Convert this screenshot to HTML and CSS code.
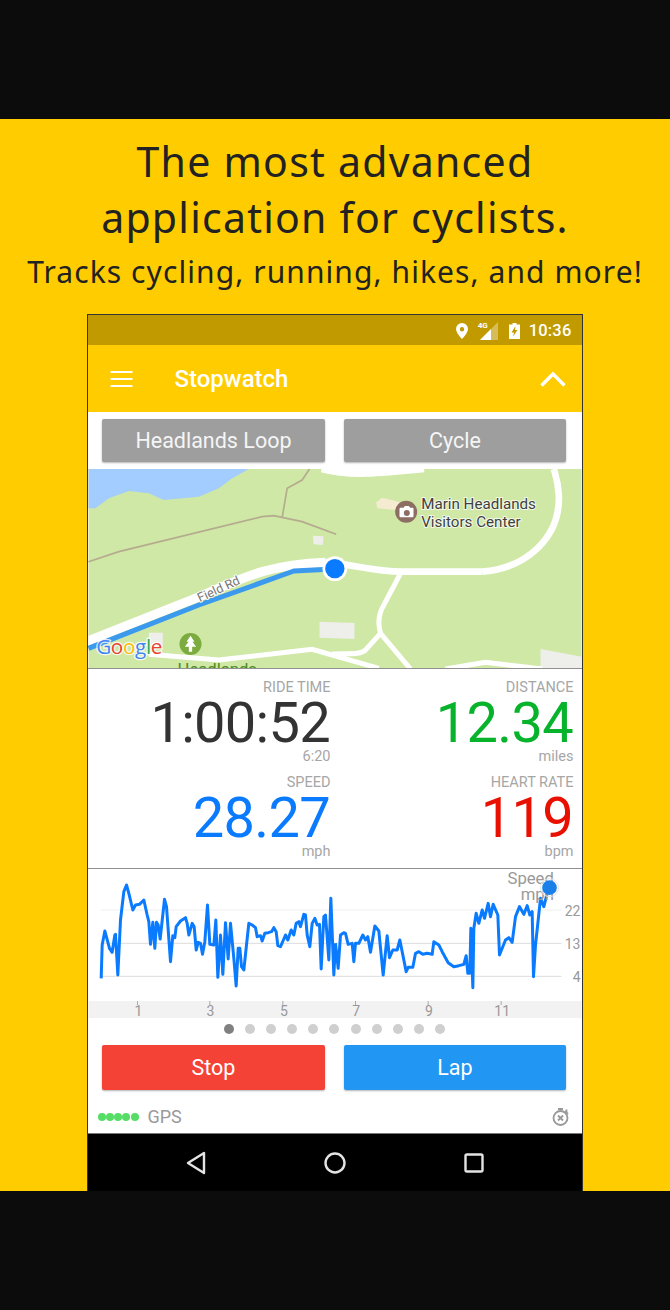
FILE: index.html
```html
<!DOCTYPE html>
<html lang="en">
<head>
<meta charset="utf-8">
<title>Stopwatch</title>
<link rel="stylesheet" href="styles.css">
</head>
<body>
<main class="band">
  <h1 class="headline">The most advanced<br>application for cyclists.</h1>
  <p class="subhead">Tracks cycling, running, hikes, and more!</p>
  <section class="phone">
    <div class="statusbar">
      <svg class="st-pin" viewBox="0 0 12 16"><path fill="#fff" fill-rule="evenodd" d="M6 0a6 6 0 0 0-6 6c0 4 6 10 6 10s6-6 6-10a6 6 0 0 0-6-6zm0 4a2.2 2.2 0 1 1 0 4.4A2.2 2.2 0 0 1 6 4z"/></svg>
      <div class="st-signal">
        <span class="st-4g">4G</span>
        <svg class="st-tri" viewBox="0 0 18 18"><path fill="#fff" opacity=".35" d="M18 0v18H0z"/><path fill="#fff" d="M11 7v11H0z"/></svg>
      </div>
      <svg class="st-batt" viewBox="0 0 11 16"><path fill="#fff" fill-rule="evenodd" d="M3.5 0h4v1.500H11V16H0V1.500h3.500zM6.500 3 2.500 9.500h2.500L4 13.500l4.500-6.500H6z"/></svg>
      <span class="st-time">10:36</span>
    </div>
    <header class="toolbar">
      <svg class="tb-menu" viewBox="0 0 22 16"><path stroke="#fff" stroke-width="2" d="M0 1h22M0 8h22M0 15h22"/></svg>
      <span class="tb-title">Stopwatch</span>
      <svg class="tb-up" viewBox="0 0 26 16"><path fill="none" stroke="#fff" stroke-width="3.400" d="M1.500 14.500 13 3l11.500 11.500"/></svg>
    </header>
    <div class="btnrow btnrow-top">
      <button class="btn btn-grey">Headlands Loop</button>
      <button class="btn btn-grey">Cycle</button>
    </div>
    <svg class="map" viewBox="9 12 1479 597">
      <rect x="9" y="12" width="1479" height="597" fill="#cfe8a6"/>
      <path fill="#a3ccff" d="M9 12H490L440 40 400 70 340 95 235 105 190 85 130 78 70 100 30 130H9z"/>
      <path class="trail" d="M9 290 100 260 530 155 565 152 650 170 752 208M590 158 605 70 650 45 672 12"/>
      <path class="bld" d="M682 212 714 214 712 240 684 238zM702 470 807 474V522L702 518zM1365 552 1490 575V612H1365zM190 503H232V545H190z"/>
      <path fill="#f5ebd0" d="M872 112 890 98 945 112 930 135 875 130z"/>
      <path class="road road-thin" d="M945 325 895 420C880 445 875 470 885 505L840 555C825 570 790 565 740 567M885 505 975 612M190 568 400 585 680 553 880 610M1080 612 1200 592 1370 612"/>
      <path class="road-top" d="M710 6C790 28 880 20 1015 6"/>
      <path class="road road-side" d="M1190 320C1320 310 1425 220 1420 90 1418 50 1410 30 1405 12"/>
      <path class="road road-east" d="M720 292C790 295 860 320 950 320H1190"/>
      <path class="road road-west" d="M-5 533 340 396C460 345 540 298 720 292"/>
      <path class="route" d="M9 550 340 420 625 318 745 312"/>
      <circle cx="748" cy="311" r="37" fill="#fff"/>
      <circle cx="748" cy="311" r="29" fill="#0a7bff"/>
      <circle cx="962" cy="140" r="33" fill="#8d6e63"/>
      <path fill="#fff" fill-rule="evenodd" d="M945 128h9l4-5h12l4 5h7a3 3 0 0 1 3 3v23a3 3 0 0 1-3 3h-36a3 3 0 0 1-3-3v-23a3 3 0 0 1 3-3zm19 7a9 9 0 1 0 0 18 9 9 0 0 0 0-18z"/>
      <circle cx="315" cy="537" r="33" fill="#7cab3f"/>
      <path fill="#fff" d="M315 512 327 530H321L332 545H320V560H310V545H298L309 530H303z"/>
      <text class="map-label" x="1007" y="131">Marin Headlands</text>
      <text class="map-label" x="1007" y="186">Visitors Center</text>
      <text class="map-road" x="343" y="412" transform="rotate(-24.500 343 412)">Field Rd</text>
      <text class="map-park" x="276" y="630">Headlands</text>
      <text class="map-google" x="32" y="568"><tspan fill="#4285f4">G</tspan><tspan fill="#ea4335">o</tspan><tspan fill="#fbbc05">o</tspan><tspan fill="#4285f4">g</tspan><tspan fill="#34a853">l</tspan><tspan fill="#ea4335">e</tspan></text>
    </svg>
    <div class="stats">
      <div class="stat">
        <span class="stat-label">RIDE TIME</span>
        <span class="stat-value v-dark">1:00:52</span>
        <span class="stat-unit">6:20</span>
      </div>
      <div class="stat">
        <span class="stat-label">DISTANCE</span>
        <span class="stat-value v-green">12.34</span>
        <span class="stat-unit">miles</span>
      </div>
      <div class="stat">
        <span class="stat-label">SPEED</span>
        <span class="stat-value v-blue">28.27</span>
        <span class="stat-unit">mph</span>
      </div>
      <div class="stat">
        <span class="stat-label">HEART RATE</span>
        <span class="stat-value v-red">119</span>
        <span class="stat-unit">bpm</span>
      </div>
    </div>
    <svg class="chart" viewBox="9 12 1479 447">
      <rect x="9" y="408" width="1479" height="52" fill="#f2f2f2"/>
      <path class="grid g1" d="M45 135H1428"/>
      <path class="grid" d="M45 235H1428M45 334H1428"/>
      <path class="tick" d="M156 408v12M373 408v12M592 408v12M810 408v12M1028 408v12M1247 408v12"/>
      <polyline class="line" points="47,340 50,240 58,198 68,235 72,250 80,262 88,210 90,208 97,330 105,165 115,80 123,60 130,85 142,135 150,120 162,118 175,105 185,150 190,170 195,238 202,172 208,250 213,172 218,180 224,222 237,103 243,125 255,290 262,212 268,218 272,185 285,168 300,158 305,175 310,210 320,175 326,185 332,255 338,232 345,235 351,268 358,230 366,120 373,238 385,240 391,165 397,337 405,210 412,328 420,173 428,282 435,175 445,280 452,363 458,250 463,250 468,305 475,315 483,240 490,175 500,180 510,188 515,215 525,212 530,228 538,205 548,203 558,200 565,188 572,200 577,242 585,245 595,222 600,210 607,225 617,195 625,210 632,175 640,170 645,185 655,148 660,150 665,210 673,245 680,175 688,160 695,180 702,178 707,312 715,155 720,150 730,285 736,100 745,330 750,235"/>
      <g transform="translate(750 0)">
        <polyline class="line" points="0,235 8,310 15,210 25,203 30,205 38,238 50,235 55,290 60,235 70,235 82,210 90,225 97,215 105,262 118,183 130,198 143,330 155,212 162,278 172,255 185,255 193,225 212,320 218,307 232,307 240,265 250,260 262,268 275,265 290,268 295,230 310,240 320,260 338,293 355,305 370,302 385,298 392,272 397,325 403,325 406,190 412,368 415,190 422,145 430,175 440,135 447,160 458,115 465,155 473,118 487,150 492,270 510,225 520,218 530,232 540,155 552,125 565,148 575,122 583,150 590,140 594,335 600,240 615,100 625,125 635,85"/>
        <text class="ch-legend" x="655" y="58">Speed</text>
        <text class="ch-legend" x="655" y="105">mph</text>
        <circle cx="642" cy="68" r="27" fill="none" stroke="#e6e6e6" stroke-width="3"/>
        <circle cx="642" cy="68" r="22" fill="#1a7fe8"/>
        <text class="ch-axis" x="735" y="152">22</text>
        <text class="ch-axis" x="735" y="251">13</text>
        <text class="ch-axis" x="735" y="350">4</text>
      </g>
      <text class="ch-tick" x="159" y="454">1</text>
      <text class="ch-tick" x="375" y="454">3</text>
      <text class="ch-tick" x="595" y="454">5</text>
      <text class="ch-tick" x="812" y="454">7</text>
      <text class="ch-tick" x="1030" y="454">9</text>
      <text class="ch-tick" x="1250" y="454">11</text>
    </svg>
    <div class="pager">
      <i class="dot dot-on"></i><i class="dot"></i><i class="dot"></i><i class="dot"></i><i class="dot"></i><i class="dot"></i><i class="dot"></i><i class="dot"></i><i class="dot"></i><i class="dot"></i><i class="dot"></i>
    </div>
    <div class="btnrow btnrow-bottom">
      <button class="btn btn-red">Stop</button>
      <button class="btn btn-blue">Lap</button>
    </div>
    <div class="gpsrow">
      <div class="gps-dots"><i></i><i></i><i></i><i></i><i></i></div>
      <span class="gps-text">GPS</span>
      <svg class="gps-icon" viewBox="0 0 18 18"><g fill="none" stroke="#999" stroke-width="1.800"><circle cx="8.500" cy="10" r="7"/><path d="M6 7.500l5 5M11 7.500l-5 5M6 1h5M13 3l3 3M14.500 1.500v3"/></g></svg>
    </div>
    <nav class="navbar">
      <svg class="nav-back" viewBox="0 0 20 24"><path fill="none" stroke="#e4e4e4" stroke-width="2.400" stroke-linejoin="round" d="M18 2V22L2 12z"/></svg>
      <svg class="nav-home" viewBox="0 0 22 22"><circle cx="11" cy="11" r="9.500" fill="none" stroke="#e4e4e4" stroke-width="2.400"/></svg>
      <svg class="nav-recent" viewBox="0 0 20 20"><rect x="1.500" y="1.500" width="17" height="17" rx="1.500" fill="none" stroke="#e4e4e4" stroke-width="2.400"/></svg>
    </nav>
  </section>
</main>
</body>
</html>
```
FILE: styles.css
```css
* { box-sizing: border-box; }
html, body { margin: 0; padding: 0; }
body {
  width: 670px;
  height: 1310px;
  background: #0c0c0c;
  font-family: Roboto, "Liberation Sans", sans-serif;
  overflow: hidden;
  padding-top: 119px;
}
.band {
  height: 1072px;
  background: #ffcc00;
  display: flex;
  flex-direction: column;
  align-items: center;
  overflow: hidden;
  padding-top: 14px;
}
.headline {
  margin: 0;
  font: 400 41px/56px "Noto Sans", sans-serif;
  letter-spacing: 1.250px;
  color: #222;
  text-align: center;
}
.subhead {
  margin: 5px 0 0;
  font: 400 30px/44px "Noto Sans", sans-serif;
  letter-spacing: 1.080px;
  color: #222;
  white-space: nowrap;
}
.phone {
  width: 496px;
  margin: 20px 0 0 -1px;
  border: 1px solid #333;
  border-bottom: 0;
  height: 877px;
  background: #fff;
  display: flex;
  flex-direction: column;
}
.statusbar {
  height: 30px;
  flex: none;
  background: #c19a00;
  display: flex;
  align-items: center;
  justify-content: flex-end;
  padding: 1px 10px 0 0;
  color: #fff;
}
.st-pin { width: 12px; height: 16px; margin-right: 8px; }
.st-signal { position: relative; width: 22px; height: 18px; margin-right: 11px; }
.st-4g {
  position: absolute;
  left: 2px;
  top: -1px;
  font: 700 8px/10px Roboto, sans-serif;
  color: #fff;
}
.st-tri { position: absolute; right: 0; bottom: 0; width: 18px; height: 18px; }
.st-batt { width: 11px; height: 16px; margin-right: 9px; }
.st-time { font: 500 16.500px/20px Roboto, sans-serif; letter-spacing: .2px; }
.toolbar {
  height: 67px;
  flex: none;
  background: #ffcc00;
  display: flex;
  align-items: center;
  padding: 0 16px 0 22px;
}
.tb-menu { width: 23px; height: 16px; flex: none; }
.tb-title {
  margin-left: 42px;
  flex: 1;
  font: 500 24px/30px Roboto, sans-serif;
  color: #fff;
}
.tb-up { width: 26px; height: 16px; flex: none; }
.btnrow {
  display: grid;
  grid-template-columns: 222.500px 222.500px;
  column-gap: 19px;
  padding-left: 14.700px;
  flex: none;
}
.btnrow-top { height: 57px; padding-top: 7px; }
.btn {
  border: 0;
  border-radius: 2px;
  color: #fff;
  font: 400 21.500px/1 Roboto, sans-serif;
  padding: 1px 0 0;
  box-shadow: 0 1px 2px rgba(0, 0, 0, .3);
}
.btnrow-top .btn { height: 43px; color: #f5f5f5; }
.btnrow-bottom { height: 45px; }
.btnrow-bottom .btn { height: 45px; }
.btn-grey { background: #9e9e9e; }
.btn-red { background: #f44336; }
.btn-blue { background: #2196f3; }
.map {
  display: block;
  width: 494px;
  height: 199px;
  flex: none;
}
.trail { fill: none; stroke: #b5ab8f; stroke-width: 5; }
.bld { fill: #eeeeea; }
.road { fill: none; stroke: #fff; stroke-width: 20; }
.road-west { stroke-width: 28; }
.road-east { stroke-width: 20; }
.road-side { stroke-width: 20; }
.road-thin { stroke-width: 15; }
.road-top { fill: none; stroke: #fff; stroke-width: 32; }
.route { fill: none; stroke: #3b99ee; stroke-width: 15; stroke-linejoin: round; }
.map-label {
  font: 400 45.500px Roboto, sans-serif;
  fill: #3f3f3f;
  stroke: #fff;
  stroke-width: 6;
  stroke-opacity: .75;
  paint-order: stroke;
}
.map-road {
  font: 400 38px Roboto, sans-serif;
  fill: #777;
  stroke: #fff;
  stroke-width: 5;
  paint-order: stroke;
}
.map-park {
  font: 400 50px Roboto, sans-serif;
  fill: #4d8c1f;
}
.map-google {
  font: 500 62px "Open Sans", sans-serif;
  stroke: #fff;
  stroke-width: 8;
  stroke-opacity: .8;
  paint-order: stroke;
  letter-spacing: -1px;
}
.stats {
  height: 201px;
  flex: none;
  border-top: 1px solid #909090;
  border-bottom: 1px solid #909090;
  display: grid;
  grid-template-columns: 243px 243px;
  grid-auto-rows: 95px;
  padding-top: 10px;
}
.stat {
  display: flex;
  flex-direction: column;
  align-items: flex-end;
}
.stat-label { font: 400 14.500px/18px Roboto, sans-serif; color: #a6a6a6; }
.stat-value {
  font: 400 56px/50px Roboto, sans-serif;
  letter-spacing: -.700px;
  margin: 1px .5px 0 0;
  white-space: nowrap;
}
.stat-unit { font: 400 14.500px/18px Roboto, sans-serif; color: #a6a6a6; }
.v-dark { color: #333; }
.v-green { color: #06b32a; }
.v-blue { color: #0a7bff; }
.v-red { color: #e81000; }
.chart {
  display: block;
  width: 494px;
  height: 149px;
  flex: none;
}
.grid { fill: none; stroke: #ddd; stroke-width: 3; }
.g1 { stroke: #eee; }
.tick { fill: none; stroke: #aaa; stroke-width: 3; }
.line { fill: none; stroke: #0a7bff; stroke-width: 9; stroke-linejoin: round; }
.ch-legend { font: 400 50px Roboto, sans-serif; fill: #999; text-anchor: end; }
.ch-axis { font: 400 42px Roboto, sans-serif; fill: #999; text-anchor: end; }
.ch-tick { font: 400 42px Roboto, sans-serif; fill: #999; text-anchor: middle; }
.pager {
  height: 27px;
  flex: none;
  display: flex;
  align-items: center;
  gap: 11.200px;
  padding: 0 0 5px 136px;
}
.dot { width: 10px; height: 10px; border-radius: 50%; background: #cfcfcf; flex: none; }
.dot-on { background: #808080; }
.gpsrow {
  height: 43px;
  flex: none;
  display: flex;
  align-items: center;
  padding: 11px 12px 0 10px;
}
.gps-dots { display: flex; gap: 0.300px; width: 50px; }
.gps-dots i { width: 8px; height: 8px; border-radius: 50%; background: #55dd66; flex: none; }
.gps-text { font: 400 18px/20px Roboto, sans-serif; color: #999; flex: 1; }
.gps-icon { width: 18px; height: 18px; flex: none; }
.navbar {
  flex: 1;
  background: #000;
  border-top: 1px solid #777;
  display: grid;
  grid-template-columns: 139px 139px 139px;
  padding-left: 39px;
  align-items: center;
  justify-items: center;
}
.nav-back { width: 20px; height: 24px; }
.nav-home { width: 22px; height: 22px; }
.nav-recent { width: 20px; height: 20px; }
```
